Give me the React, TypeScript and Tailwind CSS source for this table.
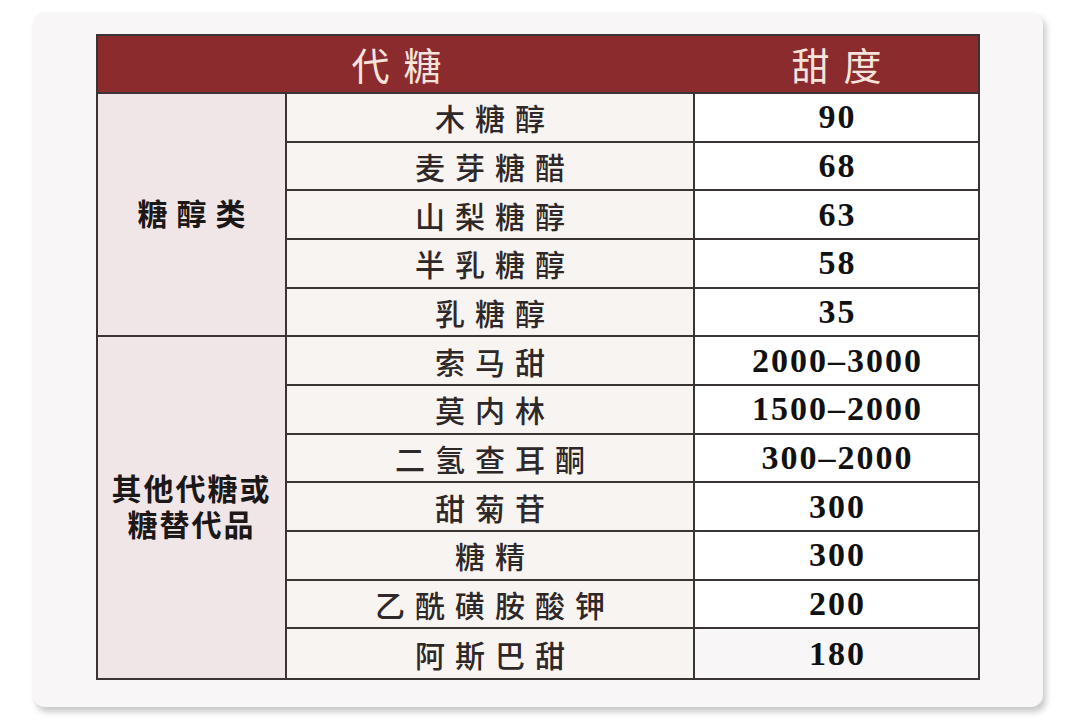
import React from "react";

const rows: { name: string; value: string }[] = [
  { name: "木糖醇", value: "90" },
  { name: "麦芽糖醋", value: "68" },
  { name: "山梨糖醇", value: "63" },
  { name: "半乳糖醇", value: "58" },
  { name: "乳糖醇", value: "35" },
  { name: "索马甜", value: "2000–3000" },
  { name: "莫内林", value: "1500–2000" },
  { name: "二氢查耳酮", value: "300–2000" },
  { name: "甜菊苷", value: "300" },
  { name: "糖精", value: "300" },
  { name: "乙酰磺胺酸钾", value: "200" },
  { name: "阿斯巴甜", value: "180" },
];

const cjk = { fontFamily: '"Noto Sans CJK SC", "Noto Sans", sans-serif' };
const num = { fontFamily: '"Liberation Serif", "Times New Roman", serif' };

export default function App() {
  return (
    <div className="w-[1080px] h-[724px] bg-white pt-[12px] pl-[33px]">
      <div className="w-[1010px] h-[695px] bg-[#f8f6f7] rounded-[12px] shadow-[3px_5px_6px_rgba(0,0,0,0.22)] pt-[22px] pl-[63px]">
        <div className="w-[884px] border-2 border-[#3b3434]">
          {/* header */}
          <div className="h-[58px] bg-[#8b2b2e] border-b-2 border-[#3b3434] grid grid-cols-[597px_1fr] items-center">
            <div
              className="text-center text-[38px] leading-none text-[#f6e4dc] tracking-[14px] pl-[14px]"
              style={cjk}
            >
              代糖
            </div>
            <div
              className="text-center text-[38px] leading-none text-[#f6e4dc] tracking-[14px] pl-[14px]"
              style={cjk}
            >
              甜度
            </div>
          </div>
          {/* body */}
          <div className="grid grid-cols-[189px_408px_1fr] grid-rows-[repeat(12,minmax(0,1fr))] h-[584px]">
            <div
              className="col-start-1 row-start-1 row-span-5 bg-[#f0e6e7] border-r-2 border-b-2 border-[#3b3434] flex items-center justify-center"
              style={cjk}
            >
              <span className="text-[30px] font-bold text-[#1c1818] tracking-[9px] pl-[9px] leading-none -mt-[6px]">
                糖醇类
              </span>
            </div>
            <div
              className="col-start-1 row-start-6 row-span-7 bg-[#f0e6e7] border-r-2 border-[#3b3434] flex flex-col items-center justify-center"
              style={cjk}
            >
              <div className="flex flex-col items-center gap-[2px] text-[30px] font-bold text-[#1c1818] tracking-[2px] leading-[34px] text-center -mt-[6px]">
                <span>其他代糖或</span>
                <span>糖替代品</span>
              </div>
            </div>
            {rows.map((r, i) => {
              const last = i === rows.length - 1;
              return (
                <React.Fragment key={i}>
                  <div
                    className={`col-start-2 bg-[#f8f4f2] border-r-2 border-[#3b3434] flex items-center justify-center ${
                      last ? "" : "border-b-2"
                    }`}
                    style={{ ...cjk, gridRowStart: i + 1 }}
                  >
                    <span className="text-[30px] font-medium leading-none text-[#2e2828] tracking-[10px] pl-[10px]">
                      {r.name}
                    </span>
                  </div>
                  <div
                    className={`col-start-3 flex items-center justify-center border-[#3b3434] ${
                      last ? "bg-[#f8f6f7]" : "bg-white border-b-2"
                    }`}
                    style={{ ...num, gridRowStart: i + 1 }}
                  >
                    <span className="text-[34px] font-bold leading-none text-[#111111] tracking-[2px] pl-[2px]">
                      {r.value}
                    </span>
                  </div>
                </React.Fragment>
              );
            })}
          </div>
        </div>
      </div>
    </div>
  );
}
